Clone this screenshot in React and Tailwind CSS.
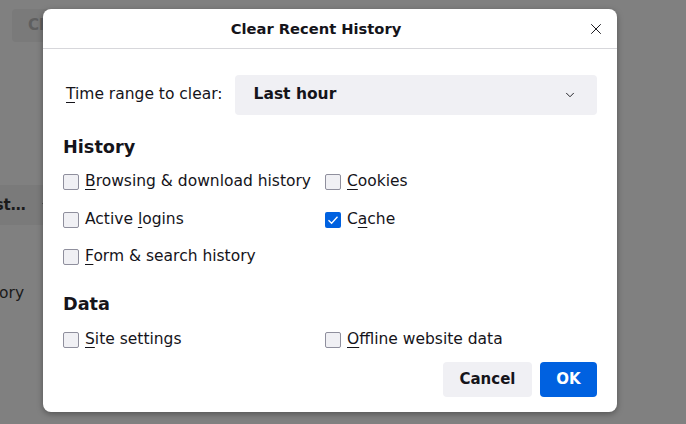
import { X, ChevronDown } from 'lucide-react';

const font = { fontFamily: '"DejaVu Sans", "Liberation Sans", sans-serif' };

function Key({ children }) {
  return <span className="underline underline-offset-[3px] decoration-1">{children}</span>;
}

function Box({ checked }) {
  return checked ? (
    <span className="flex items-center justify-center w-4 h-4 rounded-[2px] bg-[#0061e0]">
      <svg width="12" height="12" viewBox="0 0 12 12" fill="none">
        <path d="M1.5 6.2 L4.6 9.2 L10.5 2.8" stroke="white" strokeWidth="1.3" />
      </svg>
    </span>
  ) : (
    <span className="w-4 h-4 rounded-[2px] border border-[#8f8f9d] bg-[#f0f0f4]" />
  );
}

function Option({ checked, children }) {
  return (
    <label className="flex items-center gap-[6px] h-[22px] text-[15.5px] text-[#15141a]">
      <Box checked={checked} />
      <span>{children}</span>
    </label>
  );
}

export default function App() {
  return (
    <div className="relative w-[686px] h-[424px] overflow-hidden bg-[#808080]" style={font}>
      {/* background page, dimmed */}
      <div className="flex flex-col">
        <div className="pt-[9px] pl-[12px]">
          <div className="w-[80px] h-[33px] rounded bg-[#7a7a7a] px-[16px] flex items-center text-[15px] font-bold text-[#5f5f5f]">
            Clear
          </div>
        </div>
        <div className="mt-[143px] h-[40px] w-[60px] bg-[#7a7a7a] flex items-center text-[15px] font-bold text-[#1a1a1a]">
          <span className="-ml-[25px]">Last…</span>
          <ChevronDown size={12} className="ml-[14px] text-[#1a1a1a]" />
        </div>
        <div className="mt-[57px] -ml-[31px] text-[15.5px] text-[#1a1a1a]">History</div>
      </div>

      {/* dialog */}
      <div className="absolute left-[43px] top-[9px] w-[574px] h-[403px] bg-white rounded-[8px] shadow-[0_2px_6px_rgba(0,0,0,0.35)] flex flex-col">
        <div className="relative h-[40px] border-b border-[#d7d7db] flex items-center justify-center pr-[28px]">
          <h1 className="text-[14.7px] font-bold text-[#15141a] pt-[2px]">Clear Recent History</h1>
          <button className="absolute right-[12px] top-[11px] text-[#15141a]">
            <X size={18} strokeWidth={1.3} />
          </button>
        </div>

        <div className="flex flex-col px-[20px] pt-[26px]">
          <div className="flex items-center gap-[12px]">
            <span className="pl-[3px] text-[15.5px] text-[#15141a]">
              <Key>T</Key>ime range to clear:
            </span>
            <div className="flex-1 h-[40px] rounded-[4px] bg-[#f0f0f4] flex items-center justify-between pl-[19px] pr-[20px]">
              <span className="text-[15.5px] font-bold text-[#15141a]">Last hour</span>
              <ChevronDown size={14} strokeWidth={1.6} className="text-[#15141a]" />
            </div>
          </div>

          <h2 className="mt-[19px] text-[17.7px] leading-[26px] font-bold text-[#15141a]">History</h2>
          <div className="mt-[11px] grid grid-cols-[262px_1fr] gap-y-[15.5px]">
            <Option><Key>B</Key>rowsing &amp; download history</Option>
            <Option><Key>C</Key>ookies</Option>
            <Option>Active <Key>l</Key>ogins</Option>
            <Option checked>C<Key>a</Key>che</Option>
            <Option><Key>F</Key>orm &amp; search history</Option>
          </div>

          <h2 className="mt-[23px] text-[17.7px] leading-[26px] font-bold text-[#15141a]">Data</h2>
          <div className="mt-[12px] grid grid-cols-[262px_1fr]">
            <Option><Key>S</Key>ite settings</Option>
            <Option><Key>O</Key>ffline website data</Option>
          </div>

          <div className="mt-[11px] flex justify-end gap-[8px]">
            <button className="h-[35px] w-[89px] rounded-[4px] bg-[#f0f0f4] text-[15px] font-bold text-[#15141a]">
              Cancel
            </button>
            <button className="h-[35px] w-[57px] rounded-[4px] bg-[#0061e0] text-[15px] font-bold text-white">
              OK
            </button>
          </div>
        </div>
      </div>
    </div>
  );
}
